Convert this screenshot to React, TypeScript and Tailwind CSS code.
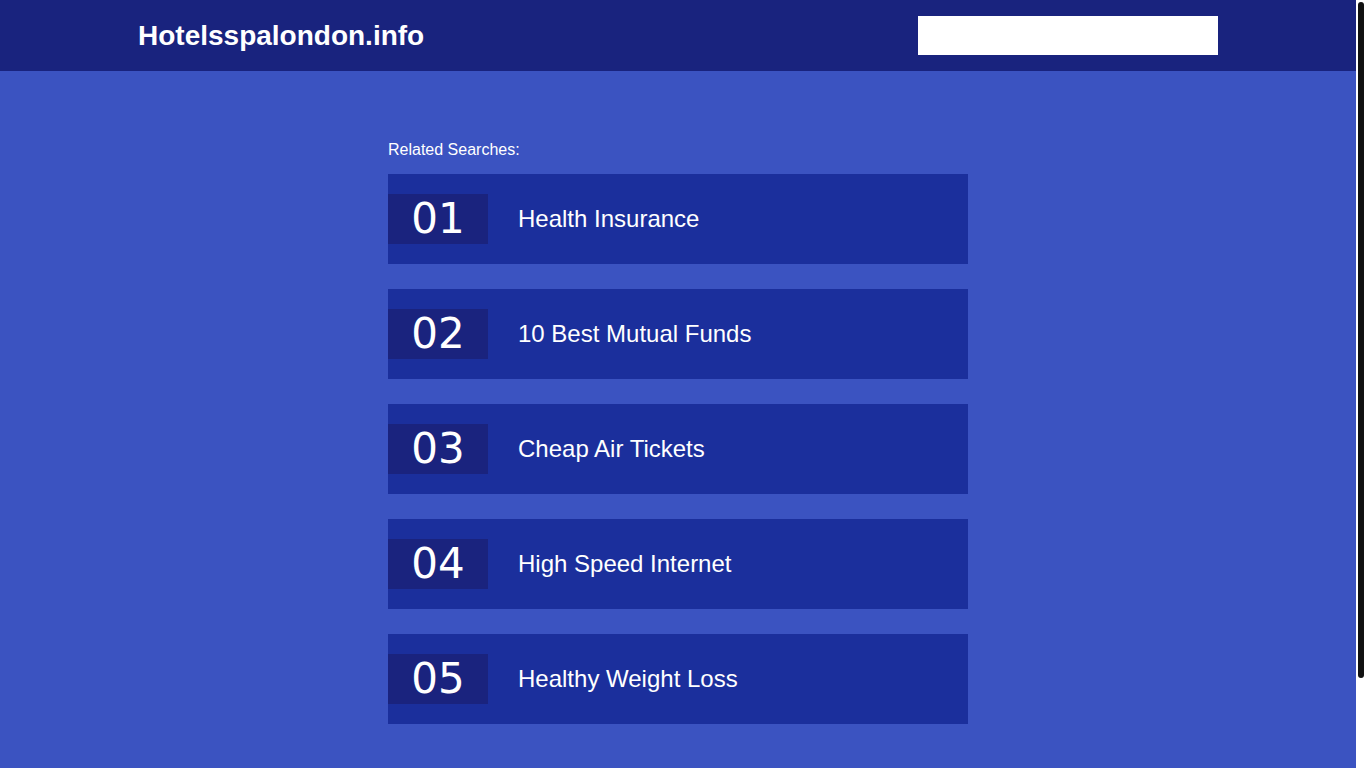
const searches = [
  'Health Insurance',
  '10 Best Mutual Funds',
  'Cheap Air Tickets',
  'High Speed Internet',
  'Healthy Weight Loss',
];

function App() {
  return (
    <div className="flex h-screen overflow-hidden bg-white font-['Liberation_Sans',Arial,sans-serif] text-white">
      <div className="min-h-[872px] flex-1 bg-[#3b53c1]">
        <header className="h-[71px] bg-[#19237e]">
          <div className="mx-auto flex h-full w-[1080px] items-center justify-between">
            <h1 className="text-[28px] font-bold leading-none">Hotelsspalondon.info</h1>
            <input type="text" className="h-[39px] w-[300px] bg-white outline-none" />
          </div>
        </header>

        <main className="mx-auto w-[580px] pt-[70px] pb-[148px]">
          <p className="mb-[15px] text-[16px] leading-[18px]">Related Searches:</p>
          <ul className="flex flex-col gap-[25px]">
            {searches.map((s, i) => (
              <li key={s} className="h-[90px] bg-[#1b2f9c] pt-[20px]">
                <a href="#" className="flex items-center">
                  <span className="flex h-[50px] w-[100px] items-center justify-center bg-[#1a237e] font-['DejaVu_Sans',sans-serif] text-[42px] leading-none">
                    {String(i + 1).padStart(2, '0')}
                  </span>
                  <span className="pl-[30px] text-[24px] leading-none">{s}</span>
                </a>
              </li>
            ))}
          </ul>
        </main>
      </div>

      {/* scrollbar */}
      <div className="w-[10px] shrink-0 bg-white pt-[2px] pl-[2px] pr-[2px]">
        <div className="h-[676px] rounded-[3px] bg-[#111]" />
      </div>
    </div>
  );
}

export default App;
